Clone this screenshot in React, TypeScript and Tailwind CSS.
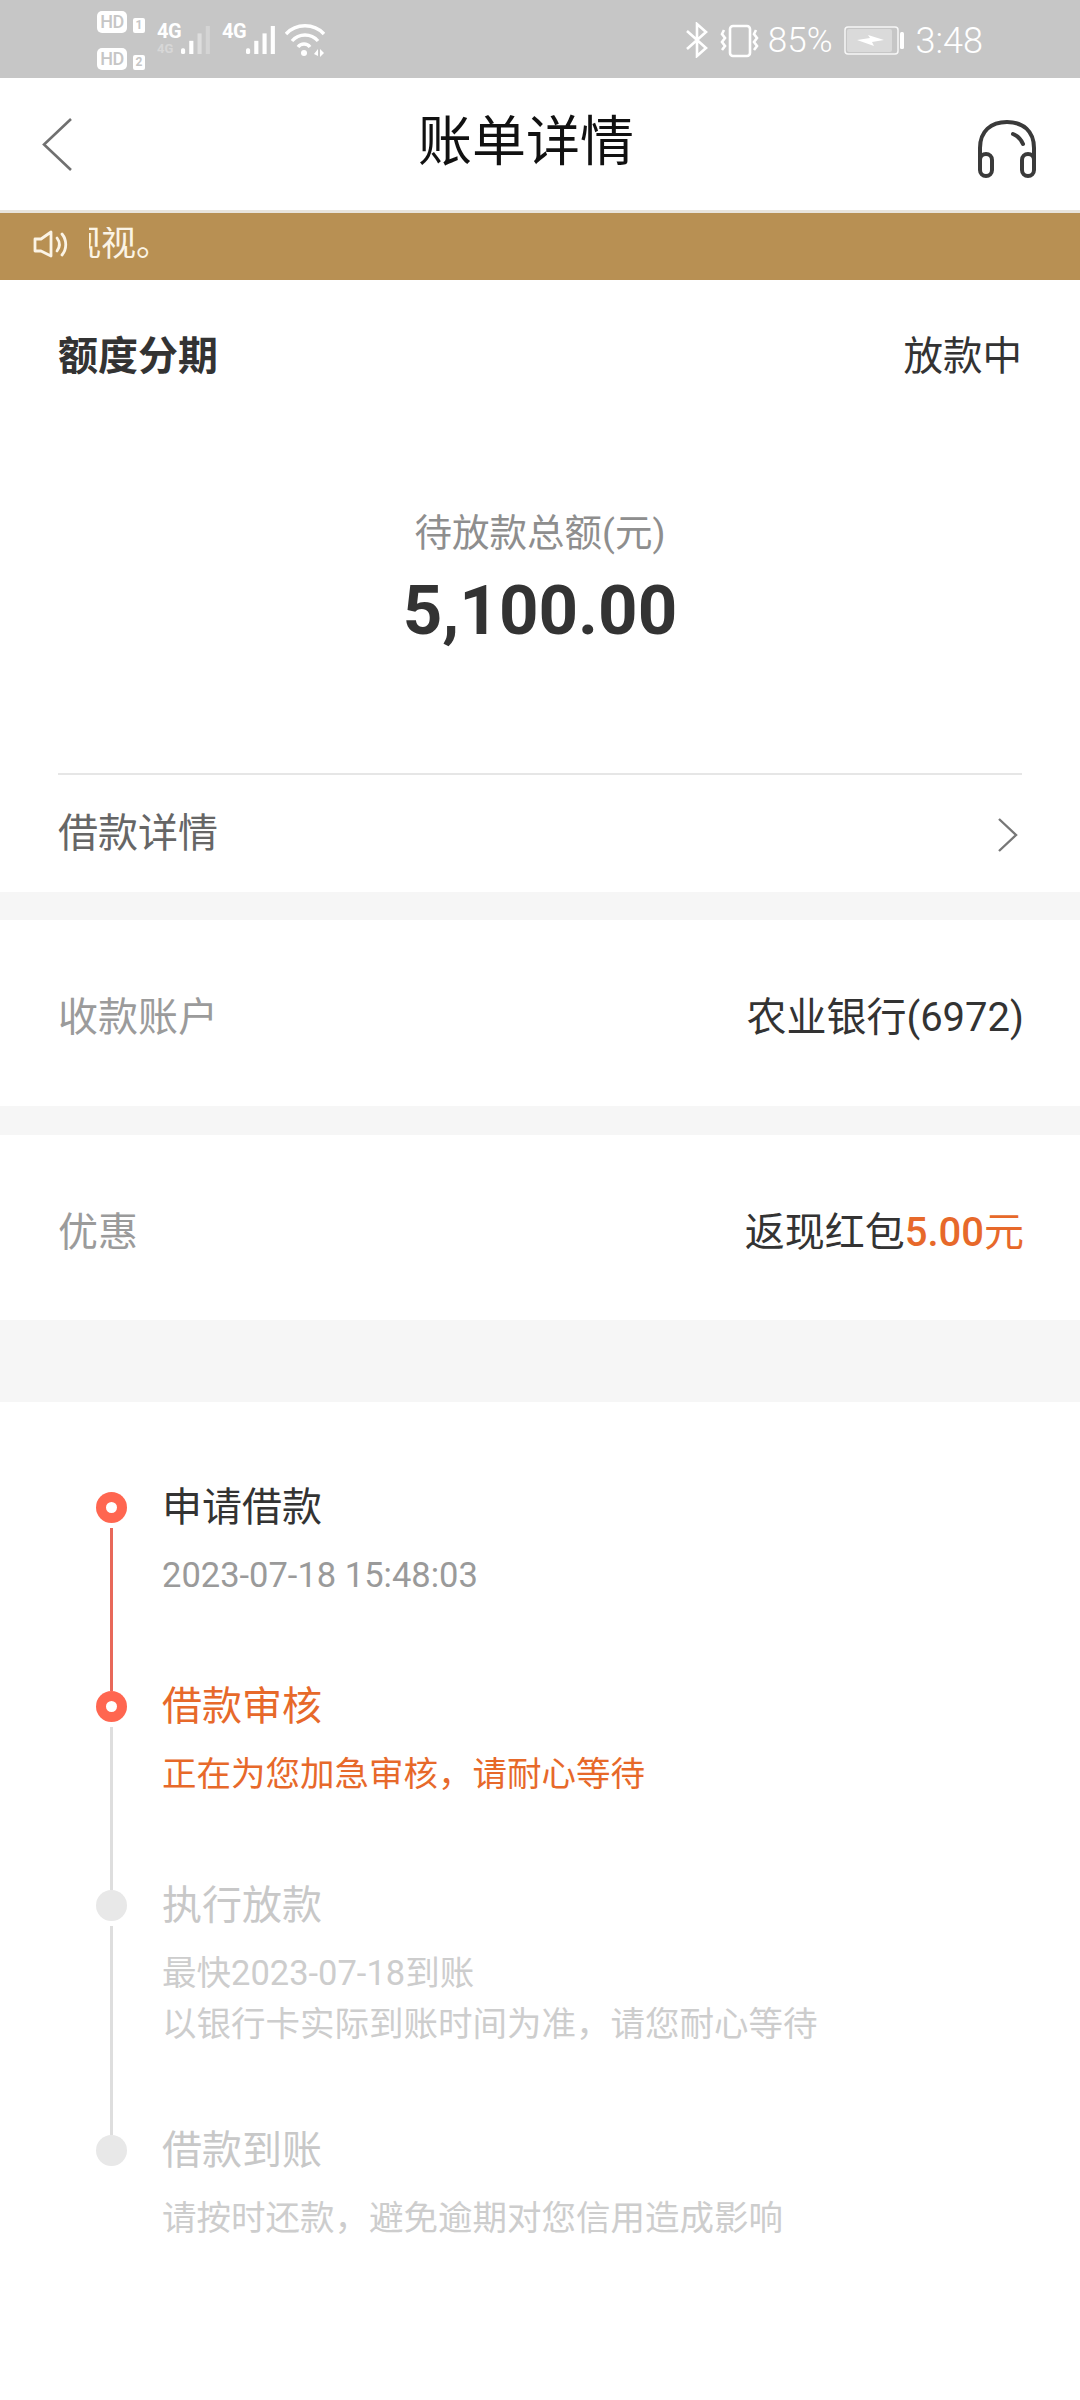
import React from "react";

const font = { fontFamily: 'Roboto, "Noto Sans CJK SC", sans-serif' };

function Signal({ dim }: { dim?: boolean }) {
  return (
    <svg width="35" height="34" viewBox="0 0 35 34" fill="white">
      <rect x="0" y="27" width="5" height="7" rx="2" />
      <rect x="10" y="18" width="5" height="16" />
      <rect x="20" y="9" width="5" height="25" opacity={dim ? 0.4 : 1} />
      <rect x="30" y="0" width="5" height="34" opacity={dim ? 0.25 : 1} />
    </svg>
  );
}

function Hd({ n }: { n: string }) {
  return (
    <div className="flex items-end gap-[6px] h-[22px]">
      <div className="w-[30px] h-[22px] rounded-[5px] bg-white text-[#c6c6c6] text-[18px] leading-[22px] text-center font-medium tracking-[-0.5px]">HD</div>
      <div className="w-[12px] h-[15px] rounded-[2px] bg-white text-[#c6c6c6] text-[12px] leading-[15px] text-center font-bold">{n}</div>
    </div>
  );
}

function StatusBar() {
  return (
    <div className="h-[78px] bg-[#c6c6c6] flex items-center text-white">
      <div className="ml-[97px] mt-[3px] flex flex-col gap-[15px]">
        <Hd n="1" />
        <Hd n="2" />
      </div>
      <div className="ml-[12px] mt-[2px] flex items-start justify-between relative w-[53px] h-[34px]">
        <div className="flex flex-col items-start">
          <span className="text-[20px] leading-[16px] font-bold tracking-[-0.5px]">4G</span>
          <span className="text-[13px] leading-[13px] mt-[3px] font-bold opacity-30">4G</span>
        </div>
        <Signal dim />
      </div>
      <div className="ml-[12px] mt-[2px] flex items-start justify-between relative w-[53px] h-[34px]">
        <span className="text-[20px] leading-[16px] font-bold tracking-[-0.5px]">4G</span>
        <Signal />
      </div>
      <svg className="ml-[10px] mt-[2px]" width="40" height="34" viewBox="0 0 40 34" fill="none" stroke="white" strokeWidth="3.4">
        <path d="M1 11 C11 0 29 0 39 11" />
        <path d="M7 18 C14 10 26 10 33 18" />
        <path d="M13 24 C16 20 22 20 25 24" />
        <circle cx="19" cy="30" r="3" fill="white" stroke="none" />
        <path d="M29 31 l4 -5 v7 z M35 26 l4 4 -4 4 z" fill="white" stroke="none" />
      </svg>
      <div className="flex-1" />
      <svg width="24" height="36" viewBox="0 0 24 36" fill="none" stroke="white" strokeWidth="2.6" className="mr-[10px] mt-[2px]">
        <path d="M2 9 L21 26 L12 34 V2 L21 10 L2 27" />
      </svg>
      <svg width="42" height="34" viewBox="0 0 42 34" fill="none" stroke="white" strokeWidth="2.6" className="mr-[7px] mt-[3px]">
        <rect x="11" y="2" width="20" height="30" rx="3" />
        <path d="M5 6 l-2 4 3 4 -3 4 3 4 -3 4" />
        <path d="M37 6 l-2 4 3 4 -3 4 3 4 -3 4" />
      </svg>
      <span className="text-[35px] leading-none mr-[11px] font-light mt-[3px]">85%</span>
      <svg width="61" height="30" viewBox="0 0 61 30" className="mr-[11px] mt-[3px]">
        <rect x="1" y="1" width="53" height="27" rx="3" fill="none" stroke="white" strokeWidth="1.5" opacity="0.85" />
        <rect x="3" y="3" width="45" height="23" rx="2" fill="white" opacity="0.35" />
        <path d="M13 14 L26 12 L24 9 L40 14 L28 16 L30 20 Z" fill="white" />
        <rect x="56" y="6" width="4" height="17" rx="1.5" fill="white" />
      </svg>
      <span className="text-[36px] leading-none mr-[97px] font-light mt-[3px]">3:48</span>
    </div>
  );
}

function Header() {
  return (
    <div className="relative h-[135px] bg-white flex items-center justify-center border-b-[3px] border-[#e8e4dc]">
      <svg className="absolute left-[41px] top-[39px]" width="32" height="56" viewBox="0 0 32 56" fill="none" stroke="#707070" strokeWidth="2.6">
        <path d="M30 2 L3 27.5 L30 53" />
      </svg>
      <span className="text-[54px] leading-none text-[#111111] mr-[28px] mb-[2px]">账单详情</span>
      <svg className="absolute left-[976px] top-[42px]" width="62" height="60" viewBox="0 0 62 60" fill="none" stroke="#3a3a3a" strokeWidth="4" strokeLinecap="round">
        <path d="M4 42 V28 C4 11 15 2 31 2 C47 2 58 11 58 28 V42" />
        <path d="M37 14 C42 16 45 19 47 24" />
        <rect x="4" y="34" width="12" height="22" rx="6" />
        <rect x="46" y="34" width="12" height="22" rx="6" />
      </svg>
    </div>
  );
}

function Banner() {
  return (
    <div className="relative h-[67px] bg-[#b89053] overflow-hidden flex items-center text-[#fbf4e6]">
      <svg className="ml-[33px] mb-[5px]" width="36" height="30" viewBox="0 0 36 30" fill="none" stroke="#fbf4e6" strokeWidth="2.8" strokeLinejoin="round" strokeLinecap="round">
        <path d="M2 10 H8 L18 3 V27 L8 22 H2 Z" />
        <path d="M24 9 C27 13 27 18 24 22" />
        <path d="M29 5 C34 11 34 20 29 26" />
      </svg>
      <div className="ml-[20px] mb-[5px] w-[82px] overflow-hidden whitespace-nowrap flex justify-end text-[35px] leading-none">
        <span className="shrink-0">观视。</span>
      </div>
    </div>
  );
}

function Row({ label, children, h }: { label: string; children: React.ReactNode; h: string }) {
  return (
    <div className={`bg-white pl-[58px] pr-[56px] pt-[10px] flex items-center justify-between ${h}`}>
      <span className="text-[40px] leading-none text-[#9b9b9b]">{label}</span>
      {children}
    </div>
  );
}

function Step({ color, title, dot, line, children, h, active }: { color: string; title: string; dot: string; line?: string; children: React.ReactNode; h: string; active?: boolean }) {
  return (
    <div className={`relative pl-[162px] ${h}`}>
      <div className={`absolute left-[96px] top-[0px] w-[31px] h-[31px] rounded-full flex items-center justify-center z-10 ${dot}`}>
        {active ? <div className="w-[11px] h-[11px] rounded-full bg-white" /> : null}
      </div>
      {line ? <div className={`absolute left-[110px] top-[36px] bottom-[0px] w-[3px] ${line}`} /> : null}
      <div className="relative -top-[4px]">
        <div className={`text-[40px] leading-[40px] ${color}`}>{title}</div>
        {children}
      </div>
    </div>
  );
}

export default function App() {
  return (
    <div className="w-[1080px] h-[2400px] bg-white overflow-hidden" style={font}>
      <StatusBar />
      <Header />
      <Banner />

      <div className="h-[612px] bg-white px-[58px] flex flex-col">
        <div className="flex justify-between items-center mt-[54px] h-[46px]">
          <span className="text-[40px] leading-none font-bold text-[#333333]">额度分期</span>
          <span className="text-[39.5px] leading-none text-[#333333]">放款中</span>
        </div>
        <div className="mt-[130px] text-center text-[37.5px] leading-[46px] text-[#8e8e8e]">待放款总额(元)</div>
        <div className="mt-[15px] text-center text-[69px] leading-[80px] font-bold text-[#333333]">5,100.00</div>
        <div className="mt-[122px] h-[2px] bg-[#e6e6e6]" />
        <div className="flex-1 flex items-center justify-between">
          <span className="text-[40px] leading-none text-[#666666]">借款详情</span>
          <svg width="22" height="36" viewBox="0 0 22 36" fill="none" stroke="#777777" strokeWidth="2.4" className="mr-[3px] mt-[3px]">
            <path d="M2 2 L19 18 L2 34" />
          </svg>
        </div>
      </div>

      <div className="h-[28px] bg-[#f6f6f6]" />
      <Row label="收款账户" h="h-[186px]">
        <span className="text-[40px] leading-none text-[#333333]">农业银行(6972)</span>
      </Row>
      <div className="h-[29px] bg-[#f6f6f6]" />
      <Row label="优惠" h="h-[185px]">
        <span className="text-[40px] leading-none text-[#333333]">
          返现红包<span className="text-[#e7692a] font-medium">5.00</span><span className="text-[#e7692a]">元</span>
        </span>
      </Row>
      <div className="h-[82px] bg-[#f6f6f6]" />

      <div className="pt-[90px] bg-white">
        <Step h="h-[199px]" active color="text-[#333333]" title="申请借款" dot="bg-[#ff6650]" line="bg-[#e8685a]">
          <div className="mt-[27px] text-[34.5px] leading-[40px] text-[#9a9a9a]">2023-07-18 15:48:03</div>
        </Step>
        <Step h="h-[199px]" active color="text-[#e7692a]" title="借款审核" dot="bg-[#ff6650]" line="bg-[#dedede]">
          <div className="mt-[27px] text-[34.5px] leading-[40px] text-[#e7692a]">正在为您加急审核，请耐心等待</div>
        </Step>
        <Step h="h-[245px]" color="text-[#c8c8c8]" title="执行放款" dot="bg-[#e8e8e8]" line="bg-[#dedede]">
          <div className="mt-[22px] text-[34.5px] leading-[51px] text-[#cdcdcd]">
            最快2023-07-18到账
            <br />
            以银行卡实际到账时间为准，请您耐心等待
          </div>
        </Step>
        <Step h="h-[150px]" color="text-[#c8c8c8]" title="借款到账" dot="bg-[#e8e8e8]">
          <div className="mt-[27px] text-[34.5px] leading-[40px] text-[#cdcdcd]">请按时还款，避免逾期对您信用造成影响</div>
        </Step>
      </div>
    </div>
  );
}
